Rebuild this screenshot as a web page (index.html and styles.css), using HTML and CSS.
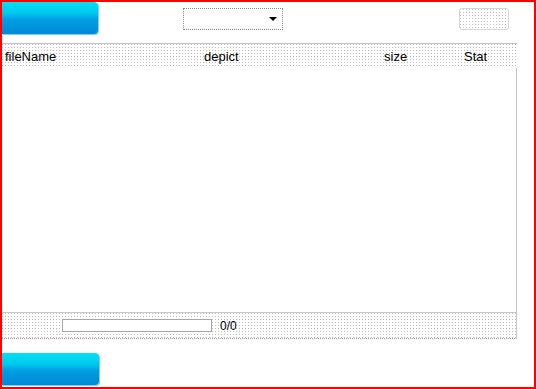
FILE: index.html
```html
<!DOCTYPE html>
<html>
<head>
<meta charset="utf-8">
<link rel="stylesheet" href="styles.css">
</head>
<body>
<div class="frame">
  <div class="toolbar">
    <div class="btn-blue"></div>
    <div class="dropdown"><span class="arrow"></span></div>
    <div class="btn-light"></div>
  </div>
  <div class="grid">
    <div class="grid-head">
      <span>fileName</span>
      <span>depict</span>
      <span>size</span>
      <span>Stat</span>
    </div>
    <div class="grid-body"></div>
    <div class="grid-foot">
      <div class="progress"></div>
      <span class="count">0/0</span>
    </div>
  </div>
  <div class="btn-blue btn-bottom"></div>
</div>
</body>
</html>
```
FILE: styles.css
```css
html, body {
  margin: 0;
  padding: 0;
  background: #fff;
}
.frame {
  width: 536px;
  height: 389px;
  box-sizing: border-box;
  border: 2px solid #ff0000;
  font-family: "Liberation Sans", Arial, sans-serif;
  font-size: 13px;
  color: #000;
}
.toolbar {
  display: flex;
  align-items: flex-start;
  height: 41px;
}
.btn-blue {
  width: 96px;
  height: 32px;
  border-radius: 0 4px 4px 0;
  background: linear-gradient(#00e2f2 0%, #00c8ee 35%, #009ee2 55%, #0088d6 100%);
  box-shadow: 1px 1px 0 #7fd0ee;
}
.dropdown {
  position: relative;
  margin-left: 85px;
  margin-top: 6px;
  width: 100px;
  height: 22px;
  box-sizing: border-box;
  border: 1px dotted #8a8a8a;
}
.arrow {
  position: absolute;
  left: 85px;
  top: 8px;
  width: 0;
  height: 0;
  border-left: 4px solid transparent;
  border-right: 4px solid transparent;
  border-top: 4px solid #000;
}
.btn-light {
  margin-left: auto;
  margin-right: 25px;
  margin-top: 6px;
  width: 50px;
  height: 22px;
  box-sizing: border-box;
  border: 1px solid #d6d6d6;
  border-radius: 3px;
  background: url("data:image/svg+xml;utf8,<svg xmlns='http://www.w3.org/2000/svg' width='3' height='3'><rect width='1' height='1' fill='%23c4c4c4'/></svg>");
}
.grid {
  width: 515px;
}
.grid-head {
  display: grid;
  grid-template-columns: 199px 180px 80px 1fr;
  align-items: center;
  height: 25px;
  box-sizing: border-box;
  padding-left: 3px;
  border-top: 1px solid #c3c3c3;
  background: url("data:image/svg+xml;utf8,<svg xmlns='http://www.w3.org/2000/svg' width='3' height='3'><rect width='1' height='1' fill='%23bdbdbd'/></svg>");
}
.grid-body {
  height: 244px;
  box-sizing: border-box;
  border-right: 1px solid #c8c8c8;
  margin-right: 0;
}
.grid-foot {
  display: flex;
  align-items: center;
  height: 27px;
  box-sizing: border-box;
  border-top: 1px solid #c8c8c8;
  border-bottom: 1px dotted #8f9aa6;
  border-right: 1px solid #c8c8c8;
  padding-left: 60px;
  background: url("data:image/svg+xml;utf8,<svg xmlns='http://www.w3.org/2000/svg' width='3' height='3'><rect width='1' height='1' fill='%23bdbdbd'/></svg>");
}
.progress {
  width: 150px;
  height: 13px;
  box-sizing: border-box;
  border: 1px solid #a6a6a6;
  background: #fff;
}
.count {
  margin-left: 8px;
  font-size: 12px;
}
.btn-bottom {
  width: 97px;
  margin-top: 14px;
}
```
